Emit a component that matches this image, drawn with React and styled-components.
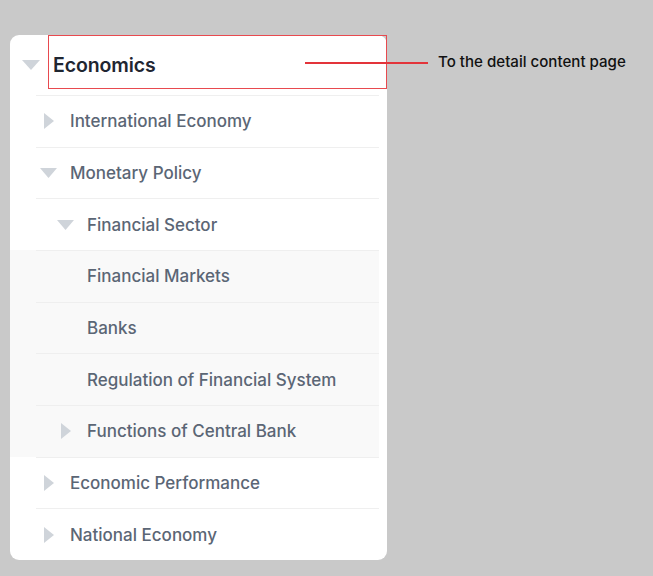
import React from "react";
import styled, { createGlobalStyle } from "styled-components";

const Global = createGlobalStyle`
  html, body { margin: 0; padding: 0; background: #c9c9c9; }
  body { font-family: "Inter", "Lato", sans-serif; -webkit-font-smoothing: antialiased; }
`;

const Page = styled.div`
  position: relative;
  width: 653px;
  height: 576px;
  padding: 35px 0 0 10px;
  box-sizing: border-box;
`;

const Card = styled.div`
  width: 377px;
  height: 525px;
  background: #ffffff;
  border-radius: 9px;
  display: flex;
  flex-direction: column;
  overflow: hidden;
`;

const Header = styled.div`
  height: 60px;
  display: flex;
  align-items: center;
  padding-left: 12px;
  box-sizing: border-box;
`;

const HeaderTitle = styled.span`
  font-size: 19.5px;
  font-weight: 600;
  color: #1f2631;
  margin-left: 13px;
  letter-spacing: -0.1px;
`;

const Group = styled.div`
  background: ${p => (p.$shaded ? "#f9f9f9" : "transparent")};
  margin-right: 8px;
  display: flex;
  flex-direction: column;
`;

const Row = styled.div`
  height: 51.7px;
  margin-left: 26px;
  border-top: 1px solid #efefef;
  display: flex;
  align-items: center;
  box-sizing: border-box;
  padding-left: ${p => 4 + 17 * (p.$level - 1)}px;
`;

const CaretSlot = styled.span`
  width: ${p => p.$w || 17}px;
  display: flex;
  justify-content: center;
  align-items: center;
  flex-shrink: 0;
`;

const Label = styled.span`
  font-size: 17px;
  font-weight: 500;
  color: #5b6675;
  margin-left: 13px;
`;

const CaretDown = ({ w = 17 }) => (
  <svg width={w} height="10" viewBox="0 0 17 10" preserveAspectRatio="none">
    <path d="M0 0 H17 L8.5 10 Z" fill="#cfd4da" />
  </svg>
);

const CaretRight = () => (
  <svg width="10" height="16" viewBox="0 0 10 16">
    <path d="M0 0 L10 8 L0 16 Z" fill="#cfd4da" />
  </svg>
);

const AnnotBox = styled.div`
  position: absolute;
  left: 48px;
  top: 35px;
  width: 339px;
  height: 54px;
  border: 1.5px solid #e84a4f;
  box-sizing: border-box;
  pointer-events: none;
`;

const AnnotLine = styled.div`
  position: absolute;
  left: 305px;
  top: 62px;
  width: 123px;
  height: 1.5px;
  background: #e3343a;
`;

const AnnotText = styled.div`
  position: absolute;
  left: 438px;
  top: 52px;
  font-size: 15.1px;
  font-weight: 500;
  color: #111111;
  white-space: nowrap;
`;

const Item = ({ level, caret, children }) => (
  <Row $level={level}>
    <CaretSlot>
      {caret === "down" && <CaretDown />}
      {caret === "right" && <CaretRight />}
    </CaretSlot>
    <Label>{children}</Label>
  </Row>
);

export default function App() {
  return (
    <>
      <Global />
      <Page>
        <Card>
          <Header>
            <CaretSlot $w={18}>
              <CaretDown w={18} />
            </CaretSlot>
            <HeaderTitle>Economics</HeaderTitle>
          </Header>
          <Group>
            <Item level={1} caret="right">International Economy</Item>
            <Item level={1} caret="down">Monetary Policy</Item>
            <Item level={2} caret="down">Financial Sector</Item>
          </Group>
          <Group $shaded>
            <Item level={2}>Financial Markets</Item>
            <Item level={2}>Banks</Item>
            <Item level={2}>Regulation of Financial System</Item>
            <Item level={2} caret="right">Functions of Central Bank</Item>
          </Group>
          <Group>
            <Item level={1} caret="right">Economic Performance</Item>
            <Item level={1} caret="right">National Economy</Item>
          </Group>
        </Card>
        <AnnotBox />
        <AnnotLine />
        <AnnotText>To the detail content page</AnnotText>
      </Page>
    </>
  );
}
